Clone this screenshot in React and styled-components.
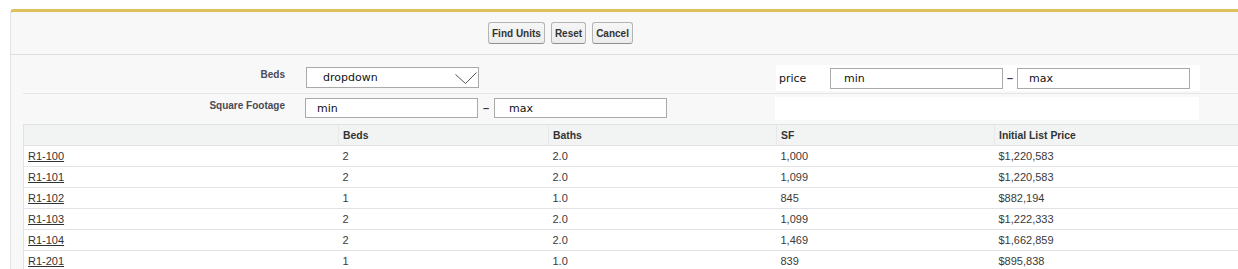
import React from 'react'
import styled, { createGlobalStyle } from 'styled-components'

const GlobalStyle = createGlobalStyle`
    body {
        margin: 0;
        background: #ffffff;
        overflow: hidden;
        font-family: "Liberation Sans", Arial, sans-serif;
    }
`

const Page = styled.div`
    padding: 9px 0 0 10px;
`

const Panel = styled.div`
    width: 1260px;
    background-color: #f8f8f8;
    border-top: 3px solid #dec15a;
    border-left: 1px solid #e3e3e3;
    border-radius: 4px 0 0 0;
    height: 260px;
`

const ButtonBar = styled.div`
    display: flex;
    align-items: center;
    gap: 6px;
    height: 42px;
    padding-left: 477px;
    border-bottom: 1px solid #e0e0e0;
`

const Button = styled.button`
    font-family: "Liberation Sans", Arial, sans-serif;
    font-size: 10px;
    font-weight: bold;
    color: #333333;
    height: 22px;
    padding: 0 3px;
    margin: 0;
    background: linear-gradient(#f6f6f6, #ececec);
    border: 1px solid #b5b5b5;
    border-bottom-color: #8f8f8f;
    border-radius: 3px;
    cursor: pointer;
    &:hover {
        background: #e0e0e0;
    }
`

const Form = styled.div`
    padding: 7px 0 0 12px;
`

const FormRow = styled.div`
    display: flex;
    height: ${(p) => p.height}px;
    border-bottom: ${(p) => (p.divided ? '1px solid #e6e6e6' : 'none')};
`

const LabelCell = styled.div`
    width: 262px;
    padding-right: 10px;
    display: flex;
    align-items: center;
    justify-content: flex-end;
    padding-bottom: 6px;
    font-size: 10px;
    font-weight: bold;
    color: #4a4a56;
`

const DataCell = styled.div`
    width: 470px;
    display: flex;
    align-items: center;
    padding-left: ${(p) => p.indent}px;
`

const SideCell = styled.div`
    display: flex;
    align-items: center;
    width: 424px;
    margin: 3px 0 2px 0;
    background-color: #ffffff;
`

const SideLabel = styled.span`
    width: 51px;
    padding-left: 3px;
    font-family: "DejaVu Sans", Verdana, sans-serif;
    font-size: 11px;
    color: #111111;
`

const TextBox = styled.div`
    box-sizing: border-box;
    width: 173px;
    height: ${(p) => p.h || 21}px;
    display: flex;
    align-items: center;
    justify-content: space-between;
    padding-left: ${(p) => p.pad || 11}px;
    padding-right: 1px;
    background: #ffffff;
    border: 1px solid #a9a9a9;
    font-family: "DejaVu Sans", Verdana, sans-serif;
    font-size: 11px;
    color: #111111;
`

const Dash = styled.span`
    width: ${(p) => p.w || 16}px;
    text-align: center;
    font-size: 11px;
    font-weight: bold;
    color: #333333;
`

const Chevron = () => (
    <svg width="22" height="14" viewBox="0 0 22 14" fill="none">
        <polyline points="0.5,3.5 10.5,12.5 21.5,1.5" stroke="#444444" strokeWidth="0.9" />
    </svg>
)

const Table = styled.table`
    margin-top: 2px;
    width: 1240px;
    table-layout: fixed;
    border-collapse: collapse;
    background: #ffffff;
    border-top: 1px solid #e0e3e5;
    border-left: 1px solid #e0e3e5;
    font-size: 11px;
`

const HeadCell = styled.th`
    height: 20px;
    padding: 0 4px;
    text-align: left;
    font-size: 10.4px;
    font-weight: bold;
    color: #333333;
    background-color: #f2f3f3;
    border-bottom: 1px solid #e0e3e5;
    border-left: 1px solid #e8e8e8;
    &:first-child {
        border-left: none;
    }
`

const Cell = styled.td`
    height: 20px;
    padding: 0 4px;
    color: #3a3a3a;
    border-bottom: 1px solid #e3e3e7;
    white-space: nowrap;
`

const UnitLink = styled.a`
    color: #333333;
    text-decoration: underline;
    cursor: pointer;
`

const units = [
    { name: 'R1-100', beds: 2, baths: '2.0', sf: '1,000', price: '$1,220,583' },
    { name: 'R1-101', beds: 2, baths: '2.0', sf: '1,099', price: '$1,220,583' },
    { name: 'R1-102', beds: 1, baths: '1.0', sf: '845', price: '$882,194' },
    { name: 'R1-103', beds: 2, baths: '2.0', sf: '1,099', price: '$1,222,333' },
    { name: 'R1-104', beds: 2, baths: '2.0', sf: '1,469', price: '$1,662,859' },
    { name: 'R1-201', beds: 1, baths: '1.0', sf: '839', price: '$895,838' },
]

function App() {
    return (
        <Page>
            <GlobalStyle />
            <Panel>
                <ButtonBar>
                    <Button>Find Units</Button>
                    <Button>Reset</Button>
                    <Button>Cancel</Button>
                </ButtonBar>
                <Form>
                    <FormRow height={31} divided>
                        <LabelCell>Beds</LabelCell>
                        <DataCell indent={11}>
                            <TextBox pad={16}>
                                dropdown
                                <Chevron />
                            </TextBox>
                        </DataCell>
                        <SideCell>
                            <SideLabel>price</SideLabel>
                            <TextBox pad={13}>min</TextBox>
                            <Dash w={14}>–</Dash>
                            <TextBox pad={11}>max</TextBox>
                        </SideCell>
                    </FormRow>
                    <FormRow height={28}>
                        <LabelCell>Square Footage</LabelCell>
                        <DataCell indent={10}>
                            <TextBox h={20} pad={11}>min</TextBox>
                            <Dash>–</Dash>
                            <TextBox h={20} pad={14}>max</TextBox>
                        </DataCell>
                        <SideCell />
                    </FormRow>
                    <Table>
                        <colgroup>
                            <col style={{ width: 315 }} />
                            <col style={{ width: 210 }} />
                            <col style={{ width: 228 }} />
                            <col style={{ width: 218 }} />
                            <col />
                        </colgroup>
                        <thead>
                            <tr>
                                <HeadCell></HeadCell>
                                <HeadCell>Beds</HeadCell>
                                <HeadCell>Baths</HeadCell>
                                <HeadCell>SF</HeadCell>
                                <HeadCell>Initial List Price</HeadCell>
                            </tr>
                        </thead>
                        <tbody>
                            {units.map((unit) => (
                                <tr key={unit.name}>
                                    <Cell><UnitLink>{unit.name}</UnitLink></Cell>
                                    <Cell>{unit.beds}</Cell>
                                    <Cell>{unit.baths}</Cell>
                                    <Cell>{unit.sf}</Cell>
                                    <Cell>{unit.price}</Cell>
                                </tr>
                            ))}
                        </tbody>
                    </Table>
                </Form>
            </Panel>
        </Page>
    )
}

export default App
